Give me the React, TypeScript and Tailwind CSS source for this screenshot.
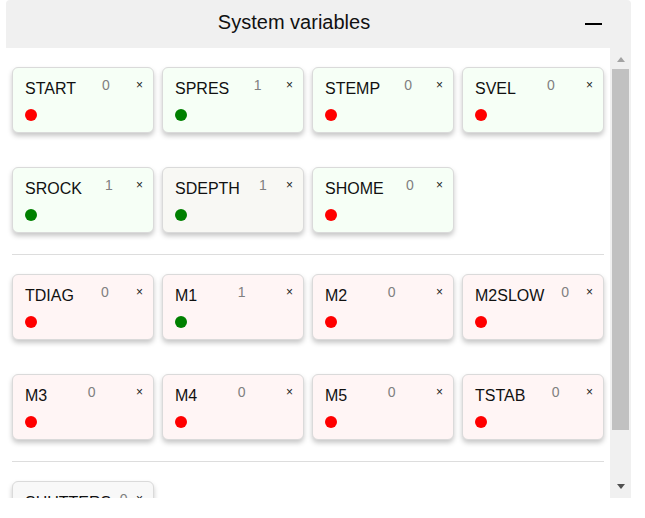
import React from "react";

type Card = { name: string; value: number; bg: string };

const G = "bg-[#f6fff6]";
const Y = "bg-[#f8f8f4]";
const R = "bg-[#fff5f5]";
const N = "bg-[#f8f8f8]";

const group1: Card[] = [
  { name: "START", value: 0, bg: G },
  { name: "SPRES", value: 1, bg: G },
  { name: "STEMP", value: 0, bg: G },
  { name: "SVEL", value: 0, bg: G },
  { name: "SROCK", value: 1, bg: G },
  { name: "SDEPTH", value: 1, bg: Y },
  { name: "SHOME", value: 0, bg: G },
];

const group2: Card[] = [
  { name: "TDIAG", value: 0, bg: R },
  { name: "M1", value: 1, bg: R },
  { name: "M2", value: 0, bg: R },
  { name: "M2SLOW", value: 0, bg: R },
  { name: "M3", value: 0, bg: R },
  { name: "M4", value: 0, bg: R },
  { name: "M5", value: 0, bg: R },
  { name: "TSTAB", value: 0, bg: R },
];

const group3: Card[] = [{ name: "SHUTTERS", value: 0, bg: N }];

function VarCard({ c }: { c: Card }) {
  return (
    <div
      className={`h-[66px] rounded-[6px] border border-[#dadada] ${c.bg} shadow-[0_3px_5px_rgba(0,0,0,0.22)] pl-[12px] pr-[10px] pt-[10px]`}
    >
      <div className="flex items-start justify-between">
        <span className="mt-[2px] text-[16px] leading-[18px] text-[#111]">{c.name}</span>
        <span className="-mt-[1px] text-[14px] leading-[16px] text-[#808080]">{c.value}</span>
        <span className="text-[12px] leading-[14px] text-[#222]">×</span>
      </div>
      <div
        className={`mt-[11px] h-[12px] w-[12px] rounded-full ${
          c.value === 1 ? "bg-[#008000]" : "bg-[#ff0000]"
        }`}
      />
    </div>
  );
}

function Group({ cards }: { cards: Card[] }) {
  return (
    <div className="grid grid-cols-4 gap-x-[8px] gap-y-[34px]">
      {cards.map((c) => (
        <VarCard key={c.name} c={c} />
      ))}
    </div>
  );
}

function Divider() {
  return <div className="mt-[21px] mb-[19px] h-px bg-[#dddddd]" />;
}

export default function App() {
  return (
    <div className="min-h-[518px] w-[645px] bg-white font-['Liberation_Sans',Arial,sans-serif]">
      <div className="ml-[6px] w-[625px]">
        <div className="flex h-[48px] items-center rounded-t-[4px] bg-[#f0f0f0]">
          <span className="mb-[4px] flex-1 text-center text-[20px] leading-[23px] text-[#111]">
            System variables
          </span>
          <div className="ml-[3px] mr-[29px] h-[2px] w-[17px] bg-black" />
        </div>
        <div className="flex h-[450px]">
          <div className="h-[450px] w-[604px] overflow-hidden bg-white px-[6px] pt-[19px]">
            <Group cards={group1} />
            <Divider />
            <Group cards={group2} />
            <Divider />
            <Group cards={group3} />
          </div>
          <div className="flex w-[21px] flex-col items-center bg-[#f0f0f0] pt-[9px]">
            <div className="h-0 w-0 border-x-[4.5px] border-b-[5px] border-x-transparent border-b-[#a3a3a3]" />
            <div className="mt-[7px] h-[361px] w-[17px] bg-[#c1c1c1]" />
            <div className="mt-[54px] h-0 w-0 border-x-[4.5px] border-t-[5px] border-x-transparent border-t-[#505050]" />
          </div>
        </div>
      </div>
    </div>
  );
}
